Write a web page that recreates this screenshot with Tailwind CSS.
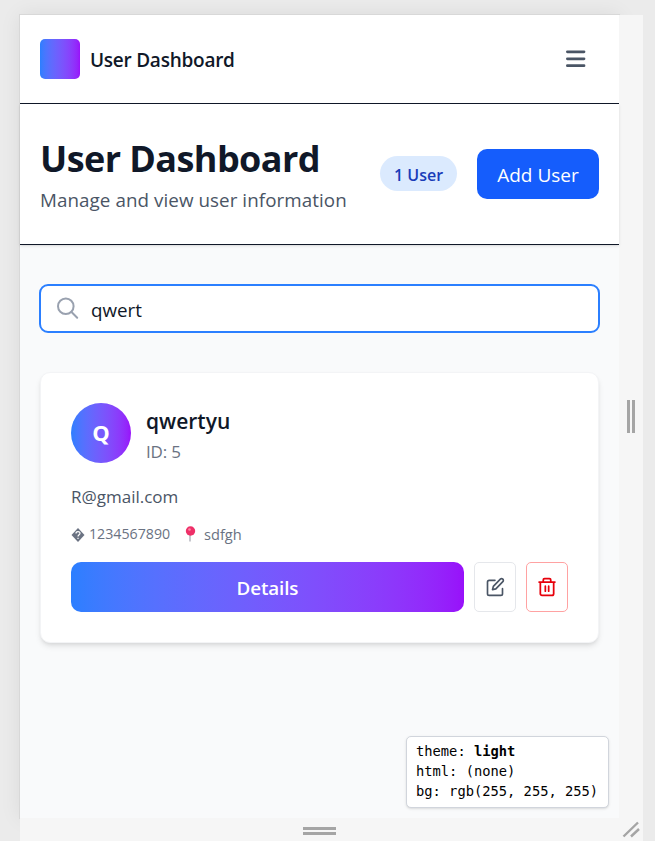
<!DOCTYPE html>
<html lang="en">
<head>
<meta charset="utf-8">
<title>User Dashboard</title>
<script src="https://cdn.jsdelivr.net/npm/@tailwindcss/browser@4"></script>
</head>
<body class="h-[841px] w-[655px] overflow-hidden bg-[#ebebeb] pt-[15px] pl-5 font-['Open_Sans','Noto_Sans',sans-serif] text-gray-900">
<div class="grid h-[826px] w-[623px] grid-cols-[599px_24px] grid-rows-[803px_23px]">
  <div class="relative flex flex-col bg-gray-50 shadow-[0_0_0_1px_#d8d8d8,0_0_20px_rgba(0,0,0,0.08)]">
    <nav class="flex h-[89px] shrink-0 items-center justify-between border-b border-gray-900 bg-white pr-[31px] pl-5">
      <div class="flex items-center gap-2.5">
        <div class="size-10 rounded-[5px] bg-linear-to-r from-[#2b7fff] to-[#9810fa]"></div>
        <span class="pt-0.5 text-[19px] leading-[30px] font-semibold tracking-[-0.25px] whitespace-nowrap">User Dashboard</span>
      </div>
      <svg class="size-[25px]" viewBox="0 0 25 25" fill="none" stroke="#4a5565" stroke-width="2.8" stroke-linecap="round"><path d="M4.4 4.8h16.6M4.4 11.8h16.6M4.4 18.7h16.6"/></svg>
    </nav>
    <header class="z-10 flex h-[141px] shrink-0 items-center justify-between border-b border-gray-900 bg-white px-5 shadow-sm">
      <div class="flex flex-col pt-0.5">
        <h1 class="text-[36px] leading-[45px] font-bold tracking-[-0.57px] whitespace-nowrap">User Dashboard</h1>
        <p class="mt-1 text-[18.8px] leading-[30px] tracking-[0.07px] whitespace-nowrap text-gray-600">Manage and view user information</p>
      </div>
      <div class="flex items-center gap-5">
        <span class="relative -top-px flex h-[35px] w-[77px] items-center justify-center rounded-full bg-blue-100 pt-[3px] text-[16px] font-semibold whitespace-nowrap text-blue-800">1 User</span>
        <button class="h-[50px] w-[122px] rounded-[10px] bg-[#155dfc] pt-[3px] text-[19px] whitespace-nowrap text-white">Add User</button>
      </div>
    </header>
    <main class="flex flex-col px-5 pt-[39px]">
      <div class="-mx-px flex h-[49px] items-center gap-3 rounded-[9px] border-2 border-[#2b7fff] bg-white pl-[15px]">
        <svg class="size-[23px]" viewBox="0 0 23 23" fill="none" stroke="#99a1af" stroke-width="2" stroke-linecap="round"><circle cx="9.8" cy="9.3" r="7.8"/><path d="M15.5 15l5.7 5.7"/></svg>
        <span class="pt-[3px] text-[18.8px] leading-[30px] whitespace-nowrap">qwert</span>
      </div>
      <article class="mt-[39px] flex h-[271px] flex-col rounded-[10px] border border-gray-100 bg-white px-[30px] pt-[30px] shadow-[0_4px_6px_-1px_rgba(0,0,0,0.1),0_2px_4px_-2px_rgba(0,0,0,0.1)]">
        <div class="flex h-[60px] items-start gap-[15px]">
          <div class="flex size-[60px] items-center justify-center rounded-full bg-linear-to-r from-[#2b7fff] to-[#9810fa] pb-px text-[22px] font-bold text-white">Q</div>
          <div class="flex flex-col pt-px">
            <h2 class="text-[21px] leading-[34px] font-semibold whitespace-nowrap">qwertyu</h2>
            <p class="mt-px text-[17px] leading-[26px] tracking-[-0.2px] whitespace-nowrap text-gray-500">ID: 5</p>
          </div>
        </div>
        <p class="mt-[21px] text-[17px] leading-[26px] whitespace-nowrap text-gray-600">R@gmail.com</p>
        <div class="mt-[14px] flex h-5 items-center text-[14.2px] leading-5 whitespace-nowrap text-gray-500">
          <svg class="mt-0.5 size-[14px]" viewBox="0 0 14 14"><path d="M7 0L13.5 7L7 14L.5 7Z" fill="#6a7282"/><path d="M5 5.4C5 3 9 3 9 5.3C9 6.8 7 6.7 7 8.5M7 9.8v1.2" fill="none" stroke="white" stroke-width="1.2"/></svg>
          <span class="ml-1 w-[94px]">1234567890</span>
          <svg class="h-4 w-[14px]" viewBox="0 0 14 16"><path d="M7 9v6.5" stroke="#b4b4be" stroke-width="1.5"/><circle cx="7.5" cy="5" r="4.7" fill="#ee3068"/><circle cx="6.5" cy="3.5" r="1.3" fill="#ff86a6"/></svg>
          <span class="ml-[7px] text-[14.6px]">sdfgh</span>
        </div>
        <div class="mt-[18px] flex gap-2.5">
          <button class="h-[50px] w-[393px] rounded-[10px] bg-linear-to-r from-[#2b7fff] to-[#9810fa] pt-[3px] text-[18.8px] font-semibold tracking-[-0.1px] text-white">Details</button>
          <button class="flex h-[50px] w-[42px] items-center justify-center rounded-[5px] border border-gray-200">
            <svg class="size-5" viewBox="0 0 24 24" fill="none" stroke="#4a5565" stroke-width="2" stroke-linecap="round" stroke-linejoin="round"><path d="M12 4H5a2 2 0 00-2 2v14a2 2 0 002 2h14a2 2 0 002-2v-6M18.400 2.600a2.100 2.100 0 013 3L13 14.200l-4 1 1-4z"/></svg>
          </button>
          <button class="flex h-[50px] w-[42px] items-center justify-center rounded-[5px] border border-[#ffa2a2]">
            <svg class="size-5" viewBox="0 0 24 24" fill="none" stroke="#e7000b" stroke-width="2.1" stroke-linecap="round" stroke-linejoin="round"><path d="M20 6v14a2 2 0 01-2 2H6a2 2 0 01-2-2V6m6 5v6m4-6v6M16.500 6V3.500A1.500 1.500 0 0015 2H9a1.500 1.500 0 00-1.500 1.500V6M2.500 6h19"/></svg>
          </button>
        </div>
      </article>
    </main>
    <pre class="absolute right-[10px] bottom-[10px] h-[72px] w-[203px] rounded-[5px] border border-gray-300 bg-white pt-1 pl-[9px] font-['DejaVu_Sans_Mono',monospace] text-[13.75px] leading-5 text-black shadow-sm">theme: <b>light</b>
html: (none)
bg: rgb(255, 255, 255)</pre>
  </div>
  <div class="relative flex items-center justify-center gap-[2px] bg-[#f6f6f6]">
    <i class="h-[33px] w-[3px] bg-[#a5a5a5]"></i><i class="h-[33px] w-[3px] bg-[#a5a5a5]"></i>
  </div>
  <div class="relative z-10 flex flex-col items-center justify-center gap-[2px] bg-[#f6f6f6] pt-[3px]">
    <i class="h-[3px] w-[33px] bg-[#a5a5a5]"></i><i class="h-[3px] w-[33px] bg-[#a5a5a5]"></i>
  </div>
  <div class="relative z-10 bg-[#f6f6f6]">
    <svg class="h-[23px] w-6" viewBox="0 0 24 23" stroke="#a5a5a5" stroke-width="2.4"><path d="M4.5 18.5L19 4.5M12 18.5L20 11"/></svg>
  </div>
</div>
</body>
</html>
